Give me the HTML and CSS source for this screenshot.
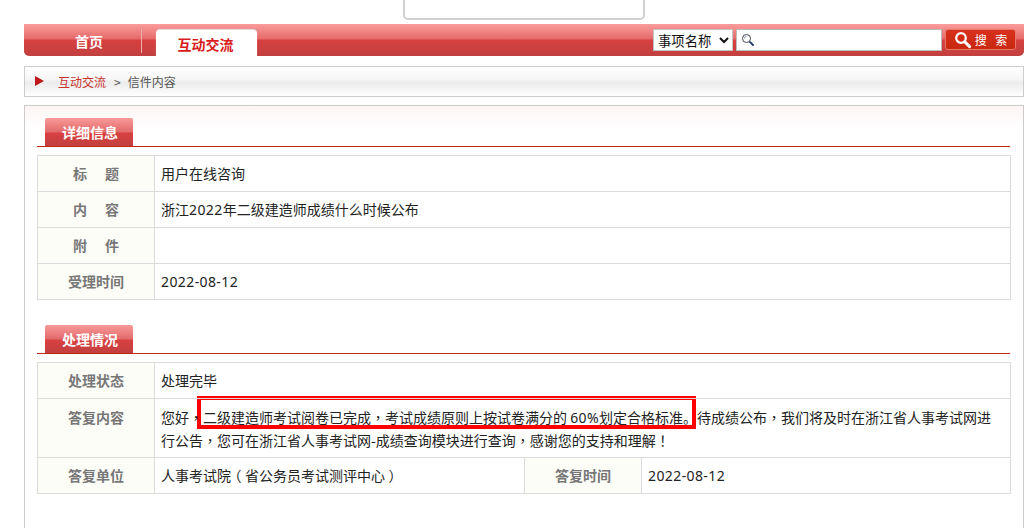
FILE: index.html
```html
<!DOCTYPE html>
<html lang="zh-CN">
<head>
<meta charset="utf-8">
<title>信件内容</title>
<link rel="stylesheet" href="styles.css">
</head>
<body>
<div class="top-stub"></div>
<nav class="nav">
  <a class="nav-home">首页</a>
  <a class="nav-tab">互动交流</a>
  <form class="search">
    <select class="search-select"><option>事项名称</option></select>
    <div class="search-input">
      <svg class="search-input-icon" width="14" height="14" viewBox="0 0 14 14"><circle cx="5.5" cy="5.5" r="4" fill="#fff" stroke="#445" stroke-width="1"/><path d="M3.4 5.5a2.1 2.1 0 0 1 2.1-2.1" fill="none" stroke="#89a" stroke-width="1"/><path d="M8.6 8.6l4 4" stroke="#223a66" stroke-width="2"/></svg>
    </div>
    <button class="search-btn" type="button">
      <svg width="18" height="18" viewBox="0 0 18 18"><circle cx="7" cy="7" r="4.8" fill="none" stroke="#fff" stroke-width="2.2"/><path d="M10.6 10.6l5 5" stroke="#fff" stroke-width="3" stroke-linecap="round"/></svg>
      <span class="search-btn-text">搜 索</span>
    </button>
  </form>
</nav>
<div class="crumb">
  <svg class="crumb-arrow" width="9" height="10" viewBox="0 0 9 10"><path d="M0 0l9 5-9 5z" fill="#c01818"/></svg>
  <a class="crumb-link">互动交流</a>
  <span class="crumb-sep">&gt;</span>
  <span class="crumb-cur">信件内容</span>
</div>
<main class="content">
  <div class="heading"><h2 class="heading-tab">详细信息</h2></div>
  <table class="info">
    <colgroup><col class="col-label"><col></colgroup>
    <tr><th>标<span class="gap"></span>题</th><td>用户在线咨询</td></tr>
    <tr><th>内<span class="gap"></span>容</th><td>浙江<span class="num">2022</span>年二级建造师成绩什么时候公布</td></tr>
    <tr><th>附<span class="gap"></span>件</th><td></td></tr>
    <tr><th>受理时间</th><td><span class="num">2022-08-12</span></td></tr>
  </table>
  <div class="heading heading-second"><h2 class="heading-tab">处理情况</h2></div>
  <table class="info">
    <colgroup><col class="col-label"><col class="col-value"><col class="col-label"><col></colgroup>
    <tr><th>处理状态</th><td colspan="3">处理完毕</td></tr>
    <tr class="row-tall">
      <th>答复内容</th>
      <td colspan="3" class="reply">您好<span class="punct" lang="zh-TW">，</span><span class="mark-anchor"><span class="mark"></span></span>二级建造师考试阅卷已完成<span class="punct" lang="zh-TW">，</span>考试成绩原则上按试卷满分的 <span class="num">60%</span>划定合格标准。待成绩公布<span class="punct" lang="zh-TW">，</span>我们将及时在浙江省人事考试网进行公告<span class="punct" lang="zh-TW">，</span>您可在浙江省人事考试网-成绩查询模块进行查询<span class="punct" lang="zh-TW">，</span>感谢您的支持和理解<span class="punct" lang="zh-TW">！</span></td>
    </tr>
    <tr><th>答复单位</th><td>人事考试院<span class="paren">（</span>省公务员考试测评中心<span class="paren">）</span></td><th>答复时间</th><td><span class="num">2022-08-12</span></td></tr>
  </table>
</main>
</body>
</html>
```
FILE: styles.css
```css
* { box-sizing: border-box; }
html, body { margin: 0; height: 528px; overflow: hidden; background: #fff; }
body { font-family: "Noto Sans CJK SC", "Noto Sans", sans-serif; font-size: 14px; color: #222; padding-left: 24px; padding-top: 24px; }

.top-stub { position: absolute; left: 403px; top: -2px; width: 242px; height: 22px; border: 2px solid #d0d0d0; border-radius: 0 0 5px 5px; background: #fff; }

.nav { display: flex; width: 1000px; height: 32px; border-radius: 0 0 5px 5px; background: linear-gradient(#fb9c9c 0, #e56a6a 15px, #d84040 16px, #c24040 100%); }
.nav-home { width: 118px; height: 24px; margin-top: 5px; padding-left: 13px; border-right: 1px solid #eeb0a8; color: #fff; font-weight: 700; line-height: 24px; text-align: center; }
.nav-tab { width: 101px; height: 26px; margin: 6px 0 0 14px; padding-right: 2px; border-radius: 4px 4px 0 0; background: #fff; box-shadow: 0 -1px 1px #ddd; color: #d81c1c; font-weight: 700; line-height: 28px; text-align: center; }

.search { display: flex; gap: 3px; margin: 5px 8px 0 auto; height: 22px; }
.search-select { width: 80px; height: 22px; border: 1px solid #c4c4c4; background: #fff; color: #111; font: 13.33px "Noto Sans CJK SC", sans-serif; padding: 0; }
.search-input { display: flex; align-items: center; width: 206px; height: 22px; padding-left: 4px; border: 1px solid #bbb; background: #fff; }
.search-btn { display: flex; align-items: center; justify-content: center; gap: 3px; width: 71px; height: 21px; padding: 0; border: 1px solid #e87868; border-radius: 3px; background: linear-gradient(#d8301c, #c82810); color: #fff; font: 12px "Noto Sans CJK SC", sans-serif; }
.search-btn-text { word-spacing: 6px; }

.crumb { display: flex; align-items: center; width: 1000px; height: 31px; margin-top: 10px; padding-left: 10px; border: 1px solid #ccc; background: linear-gradient(#fff 0, #f6f6f6 40%, #ececec 55%, #f6f6f6 80%, #fff 100%); font-size: 12px; }
.crumb-arrow { margin-right: 14px; margin-top: -2px; }
.crumb-link { color: #c8302c; }
.crumb-sep { margin: 0 7px 0 8px; color: #555; }
.crumb-cur { color: #555; }

.content { isolation: isolate; width: 1000px; height: 440px; margin-top: 8px; padding: 12px; border: 1px solid #ccc; background: linear-gradient(#fbf5f3, #fff 22px); }

.heading { height: 29px; border-bottom: 1px solid #c02a10; margin-right: 1px; padding-left: 8px; }
.heading-second { margin-top: 25px; }
.heading-tab { width: 88px; height: 28px; margin: 0; padding-left: 2px; border-radius: 2px 2px 0 0; background: linear-gradient(#f89a9a 0, #e26a6a 14px, #d84040 15px, #c24040 100%); color: #fff; font-size: 14px; font-weight: 700; line-height: 28px; text-align: center; }

.info { width: 974px; margin-top: 8px; border-collapse: collapse; table-layout: fixed; }
.col-label { width: 117px; }
.col-value { width: 370px; }
.info th, .info td { height: 36px; border: 1px solid #dcdcdc; font-size: 14px; line-height: 23px; }
.info th { padding: 0; background: #fdfdf8; color: #777; font-weight: 700; text-align: center; }
.info td { padding: 0 6px; color: #222; }
.gap { display: inline-block; width: 18px; }
.num { font-family: "Noto Sans", sans-serif; letter-spacing: .4px; }
.punct { font-family: "Noto Sans CJK TC", sans-serif; }
.paren { display: inline-block; width: 14px; font-feature-settings: "halt"; text-align: center; }

.row-tall th { height: 58px; vertical-align: top; padding-top: 7px; }
.row-tall td { height: 58px; padding-top: 7px; padding-bottom: 5px; vertical-align: top; }
.mark-anchor { position: relative; }
.mark { position: absolute; z-index: -1; left: -6px; top: -11px; width: 499px; height: 33px; border: 4px solid #f00; pointer-events: none; }
```
